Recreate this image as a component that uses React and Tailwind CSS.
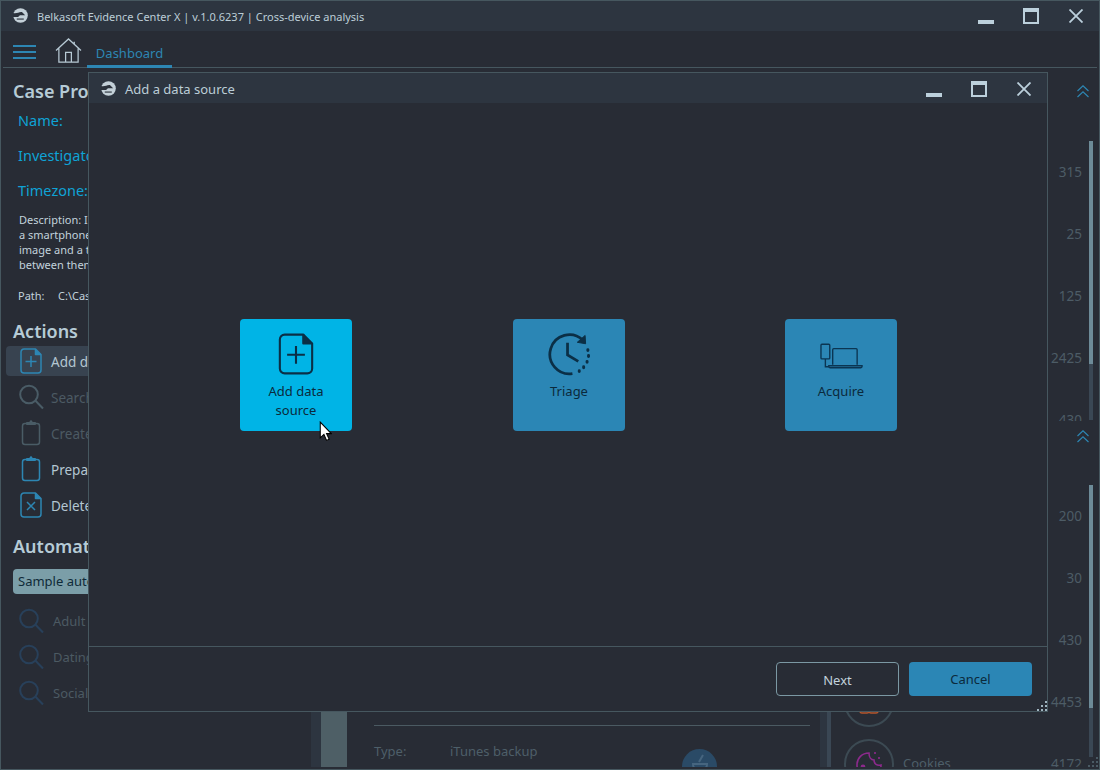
const F = "font-['Noto_Sans','Open_Sans',sans-serif]";

function Logo({ className }) {
  return (
    <svg viewBox="0 0 16 16" className={className} fill="none">
      <circle cx="8" cy="8" r="7.8" fill="#c3d0d8" />
      <path d="M0 5.2C4 6.4 6 3.8 9.5 4.2L13 7.6H7.4L5.4 9.6H0Z" fill="#2b323c" />
      <path d="M4 11.8H11.5" stroke="#2b323c" strokeWidth="1.2" />
    </svg>
  );
}

function WinButtons({ className }) {
  return (
    <div className={"flex items-start self-start " + className}>
      <div className="w-4 h-1 bg-[#bcd0dc] mt-[20px] mr-[29px]" />
      <div className="w-4 h-4 border-2 border-t-[4px] border-[#bcd0dc] mt-2 mr-[30px] box-border" />
      <svg viewBox="0 0 14 14" className="w-[14px] h-[14px] mt-[9px]" stroke="#bcd0dc" strokeWidth="1.8">
        <path d="M0.5 0.5 13.5 13.5M13.5 0.5 0.5 13.5" />
      </svg>
    </div>
  );
}

function FileIcon({ children, stroke = "#2d86b3", className = "w-[22px] h-[26px]", sw = 1.5 }) {
  return (
    <svg viewBox="0 0 22 26" className={"shrink-0 " + className} fill="none" stroke={stroke} strokeWidth={sw} strokeLinejoin="round">
      <path d="M4 1H15.5L21 6.5V22A3 3 0 0 1 18 25H4A3 3 0 0 1 1 22V4A3 3 0 0 1 4 1Z" />
      <path d="M15.5 1V6.5H21" fill={stroke} />
      {children}
    </svg>
  );
}

function Clip({ stroke }) {
  return (
    <svg viewBox="0 0 20 26" className="shrink-0 w-[20px] h-[26px]" fill="none" stroke={stroke} strokeWidth="1.5">
      <rect x="1.5" y="3.5" width="17" height="21" rx="2.5" />
      <path d="M6 4.2H14V2.8H11.4L10 1 8.6 2.8H6Z" fill={stroke} />
    </svg>
  );
}

function Mag({ stroke, className = "w-[26px] h-[26px]" }) {
  return (
    <svg viewBox="0 0 26 26" className={"shrink-0 " + className} fill="none" stroke={stroke} strokeWidth="2">
      <circle cx="11" cy="10.5" r="8.8" />
      <path d="M17.5 16.8 25 24.5" />
    </svg>
  );
}

function ActionRow({ icon, label, active, dim }) {
  return (
    <div className={"flex items-center h-[30px] w-[300px] pl-[14px] gap-[9px] rounded-sm mb-[6px] " + (active ? "bg-[#384350]" : "")}>
      <div className="w-[22px] flex justify-center">{icon}</div>
      <span className={"mt-[2px] text-[13.5px] " + (dim ? "text-[#4c5a63]" : "text-[#b4c7d2]")}>{label}</span>
    </div>
  );
}

function AutoRow({ label }) {
  return (
    <div className="flex items-center h-[36px] pl-[17px] gap-[9px]">
      <Mag stroke="#28405a" />
      <span className="mt-[2px] text-[13px] text-[#4c5a63]">{label}</span>
    </div>
  );
}

function Sidebar() {
  return (
    <div className="w-[310px] shrink-0 h-full overflow-hidden">
      <div className="pl-[12px] pt-[9px] text-[18px] leading-[28px] font-semibold text-[#b6cbd6]">Case Properties</div>
      <div className="pl-[17px] mt-[5px] text-[14.5px] leading-[20px] text-[#0fa3d6]">Name:</div>
      <div className="pl-[17px] mt-[15px] text-[14.5px] leading-[20px] text-[#0fa3d6]">Investigator:</div>
      <div className="pl-[17px] mt-[15px] text-[14.5px] leading-[20px] text-[#0fa3d6]">Timezone:</div>
      <div className="pl-[18px] mt-[12px] text-[11px] leading-[15px] text-[#c2d2dc] whitespace-nowrap">
        <div>Description: In this case we have</div>
        <div>a smartphone backup, a computer</div>
        <div>image and a tablet with links</div>
        <div>between them</div>
      </div>
      <div className="pl-[17px] mt-[16px] text-[11px] leading-[16px] text-[#c2d2dc] flex">
        <span className="w-[40px]">Path:</span><span>C:\Cases\Cross-device</span>
      </div>
      <div className="pl-[12px] mt-[13px] text-[18px] leading-[28px] font-semibold text-[#b6cbd6]">Actions</div>
      <div className="pl-[5px] mt-[1px]">
        <ActionRow active label="Add data source" icon={
          <FileIcon><path d="M11 8V19M5.5 13.5H16.5" /></FileIcon>} />
        <ActionRow dim label="Search" icon={<Mag stroke="#4a5c66" />} />
        <ActionRow dim label="Create report" icon={<Clip stroke="#4a5c66" />} />
        <ActionRow label="Prepare" icon={<Clip stroke="#2d86b3" />} />
        <ActionRow label="Delete" icon={
          <FileIcon><path d="M7 10 15 18M15 10 7 18" /></FileIcon>} />
      </div>
      <div className="pl-[12px] mt-[12px] text-[18px] leading-[28px] font-semibold text-[#b6cbd6]">Automation</div>
      <div className="ml-[12px] mt-[9px] h-[25px] w-[200px] bg-[#7b9ea8] rounded-sm pl-[5px] text-[13px] leading-[25px] text-[#0f2a38]">Sample automation</div>
      <div className="mt-[9px]">
        <AutoRow label="Adult" />
        <AutoRow label="Dating" />
        <AutoRow label="Social" />
      </div>
    </div>
  );
}

function Center() {
  return (
    <div className="w-[509px] shrink-0 h-full flex flex-col justify-end pb-[2px]">
      <div className="flex h-[58px] overflow-hidden">
        <div className="w-[10px] bg-[#2d3540]" />
        <div className="w-[26px] bg-[#4e5f66]" />
        <div className="flex-1 pl-[27px] pr-[10px]">
          <div className="h-px bg-[#4b5a62] mt-[16px]" />
          <div className="flex items-start mt-[16px] text-[13px] leading-[18px] text-[#4e5f69]">
            <span className="w-[76px]">Type:</span>
            <span>iTunes backup</span>
            <div className="ml-auto mr-[93px] mt-[7px] w-[35px] h-[35px] shrink-0 rounded-full bg-[#2a4a66] flex justify-center pt-[5px]">
              <svg viewBox="0 0 20 20" className="w-[20px] h-[20px]" fill="none" stroke="#46657f" strokeWidth="2">
                <path d="M13 1 9 8M3 10H17C17 14 14 16 10 16 6 16 3 14 3 10Z" />
              </svg>
            </div>
          </div>
        </div>
      </div>
    </div>
  );
}

function Chevrons({ className = "" }) {
  return (
    <svg viewBox="0 0 12 13" className={"w-[12px] h-[13px] " + className} fill="none" stroke="#2d86b3" strokeWidth="1.2">
      <path d="M0.5 6 6 0.8 11.5 6M0.5 12 6 6.8 11.5 12" />
    </svg>
  );
}

function Row({ n, label, icon }) {
  return (
    <div className="h-[62px] shrink-0 flex items-center pl-[12px] pr-[7px]">
      <div className="w-[50px] h-[50px] shrink-0 rounded-full border-2 border-[#3c4a53] flex items-center justify-center">{icon}</div>
      <span className="ml-[9px] text-[13px] text-[#4e5f69]">{label}</span>
      <span className="ml-auto text-[13.5px] text-[#4d5c66]">{n}</span>
    </div>
  );
}

function Section({ top, chevronTop, height, listH, trackH, thumbH, rows }) {
  return (
    <div className="shrink-0 overflow-hidden flex flex-col" style={{ height }}>
      <div className="shrink-0 flex justify-end pr-[10px]" style={{ height: top, paddingTop: chevronTop }}>
        <Chevrons />
      </div>
      <div className="flex items-start">
        <div className="flex-1 flex flex-col overflow-hidden" style={{ height: listH }}>
          {rows.map((r) => <Row key={r.n + r.label} {...r} />)}
        </div>
        <div className="w-[4px] mr-[6px] bg-[#3a4754] shrink-0" style={{ height: trackH }}>
          <div className="bg-[#6d8b98]" style={{ height: thumbH }} />
        </div>
      </div>
    </div>
  );
}

function Right() {
  const orange = (
    <svg viewBox="0 0 24 24" className="w-[24px] h-[24px]" fill="none" stroke="#b5562c" strokeWidth="1.4">
      <rect x="3" y="15" width="9" height="8" rx="2" />
      <rect x="12" y="15" width="9" height="8" rx="2" />
    </svg>
  );
  const cookie = (
    <svg viewBox="0 0 30 30" className="w-[30px] h-[30px]" fill="none" stroke="#8c2a8c" strokeWidth="1.6">
      <path d="M15 4C8 4 3 9 3 16S8 28 15 28 27 23 27 16C23 17 20 15 20 11 17 11 15 8 15 4Z" />
      <circle cx="9" cy="18" r="1.6" fill="#8c2a8c" />
      <path d="M21 3V5M25 8V10M14 20V22M20 21V23" />
    </svg>
  );
  const plain = <div className="w-[22px] h-[22px] rounded-full border border-[#3c4a53]" />;
  return (
    <div className="flex-1 min-w-0 h-full flex">
      <div className="w-[12px] shrink-0 flex self-end h-[100px] mb-[2px]">
        <div className="w-[7px] bg-[#2d3540]" />
        <div className="w-[4px] bg-[#3a4754]" />
      </div>
      <div className="flex-1 min-w-0 flex flex-col">
        <Section top={73} chevronTop={17} height={353} listH={280} trackH={279} thumbH={223}
          rows={[
            { n: "315", label: "Calls", icon: plain },
            { n: "25", label: "Notes", icon: plain },
            { n: "125", label: "Contacts", icon: plain },
            { n: "2425", label: "Messages", icon: plain },
            { n: "430", label: "Pictures", icon: plain },
          ]} />
        <Section top={64} chevronTop={9} height={346} listH={282} trackH={272} thumbH={223}
          rows={[
            { n: "200", label: "Bookmarks", icon: plain },
            { n: "30", label: "Downloads", icon: plain },
            { n: "430", label: "History", icon: plain },
            { n: "4453", label: "Cache", icon: orange },
            { n: "4172", label: "Cookies", icon: cookie },
          ]} />
      </div>
    </div>
  );
}

function Grip({ className, fill }) {
  return (
    <svg viewBox="0 0 10 10" className={"absolute w-[10px] h-[10px] " + className} fill={fill}>
      <path d="M8 0h2v2H8zM4 4h2v2H4zM8 4h2v2H8zM0 8h2v2H0zM4 8h2v2H4zM8 8h2v2H8z" />
    </svg>
  );
}

export default function App() {
  return (
    <div className={"relative w-[1100px] h-[770px] overflow-hidden bg-[#282c35] border border-[#46575f] flex flex-col " + F}>
      <div className="h-[30px] shrink-0 bg-[#2d3540] flex items-center">
        <Logo className="w-[15px] h-[15px] ml-[12px] -mt-[1px]" />
        <span className="ml-[9px] mt-[2px] text-[11px] leading-[16px] text-[#bccdd7]">Belkasoft Evidence Center X | v.1.0.6237 | Cross-device analysis</span>
        <WinButtons className="ml-auto mr-[16px] h-[30px] -mt-[1px]" />
      </div>
      <div className="h-[37px] shrink-0 flex items-end mx-[2px] border-b border-[#46575f] relative">
        <div className="w-[23px] h-[14px] ml-[10px] mb-[8px] flex flex-col justify-between">
          <div className="h-[2px] bg-[#2d86b3]" /><div className="h-[2px] bg-[#2d86b3]" /><div className="h-[2px] bg-[#2d86b3]" />
        </div>
        <svg viewBox="0 0 28 26" className="w-[27px] h-[25px] ml-[19px] mb-[4px]" fill="none" stroke="#b7c9d4" strokeWidth="1.3">
          <path d="M1 13 14 1 27 13M4 11V25H24V11M11 25V15H17V25M20 4V7" />
        </svg>
        <div className="ml-[5px] w-[85px] h-[30px] text-center text-[13px] leading-[30px] text-[#2d86b3] border-b-[3px] border-[#2d86b3] -mb-[1px]">Dashboard</div>
      </div>
      <div className="flex-1 flex min-h-0">
        <Sidebar />
        <Center />
        <Right />
      </div>
      <Grip className="right-[1px] bottom-[2px]" fill="#4a5a64" />

      <div className="absolute left-[87px] top-[71px] w-[960px] h-[640px] bg-[#282c35] border border-[#46575f] flex flex-col">
        <div className="h-[30px] shrink-0 bg-[#2d3540] flex items-center">
          <Logo className="w-[15px] h-[15px] ml-[12px]" />
          <span className="ml-[9px] mt-[2px] text-[13px] leading-[18px] text-[#bccdd7]">Add a data source</span>
          <WinButtons className="ml-auto mr-[16px] h-[30px]" />
        </div>
        <div className="flex-1 flex justify-center items-center pl-[1px]">
          <div className="w-[112px] h-[112px] mr-[161px] rounded-sm bg-[#00b4e6] flex flex-col items-center pt-[14px] text-[#0b2a3c]">
            <FileIcon stroke="#0b2f46" className="w-[36px] h-[42px]" sw={1.3}><path d="M11 8V19M5.5 13.5H16.5" /></FileIcon>
            <div className="mt-[7px] text-[13px] leading-[19px] text-center w-[70px]">Add data source</div>
          </div>
          <div className="w-[112px] h-[112px] mr-[160px] rounded-sm bg-[#2b86b5] flex flex-col items-center pt-[14px] text-[#0b2a3c]">
            <svg viewBox="0 0 44 44" className="w-[43px] h-[43px] -ml-[2px]" fill="none" stroke="#0b2f46" strokeWidth="2.8">
              <path d="M26 41.5A20 20 0 1 1 36.5 7" />
              <path d="M39 2.5 39.5 11 31 9.5Z" fill="#0b2f46" strokeWidth="1" />
              <path d="M21 10V22.5L32 29" />
              <path d="M41.8 17V18M42.5 23V24M41 29V30M37.5 34.5V35.5M33 38.5V39.5" strokeWidth="3" strokeLinecap="round" />
            </svg>
            <div className="mt-[6px] text-[13px] leading-[19px]">Triage</div>
          </div>
          <div className="w-[112px] h-[112px] rounded-sm bg-[#2b86b5] flex flex-col items-center pt-[24px] text-[#0b2a3c]">
            <svg viewBox="0 0 44 26" className="w-[43px] h-[26px]" fill="none" stroke="#0b3552" strokeWidth="1.4">
              <rect x="1" y="1" width="9" height="15" rx="1" />
              <path d="M5.5 16V24H9M13 22V6.5A1 1 0 0 1 14 5.5H37A1 1 0 0 1 38 6.5V22" />
              <path d="M9 23H43V24A1.5 1.5 0 0 1 41.5 25H10.5A1.5 1.5 0 0 1 9 24Z" />
            </svg>
            <div className="mt-[13px] text-[13px] leading-[19px]">Acquire</div>
          </div>
        </div>
        <div className="h-[65px] shrink-0 border-t border-[#46575f] flex items-start justify-end pt-[15px] pr-[15px] gap-[10px] relative">
          <div className="w-[123px] h-[34px] border border-[#7b98a3] rounded-sm text-center text-[13px] leading-[34px] text-[#c2d2dc]">Next</div>
          <div className="w-[123px] h-[34px] bg-[#2b86b5] rounded-sm text-center text-[13px] leading-[34px] text-[#0b2a3c]">Cancel</div>
          <Grip className="right-0 bottom-0" fill="#a0b5c0" />
        </div>
      </div>

      <svg viewBox="0 0 12 20" className="absolute left-[318px] top-[420px] w-[13px] h-[21px]">
        <path d="M1 1V16L4.5 12.8 7 18.5 9.5 17.4 7 12H11.5Z" fill="#fff" stroke="#000" strokeWidth="1" />
      </svg>
    </div>
  );
}
